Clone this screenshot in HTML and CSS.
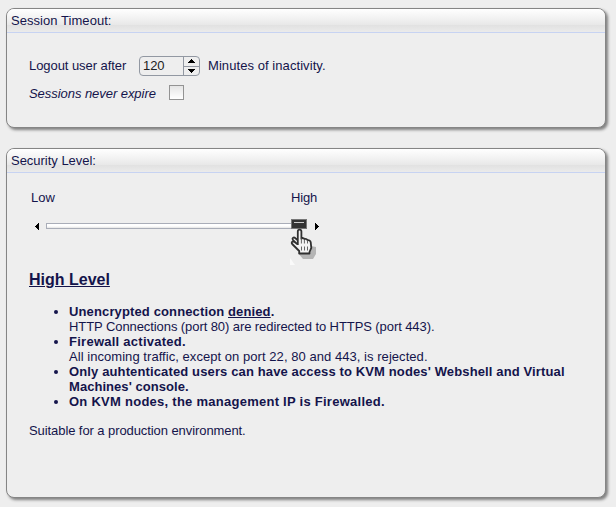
FILE: index.html
```html
<!DOCTYPE html>
<html lang="en">
<head>
<meta charset="utf-8">
<title>Security settings</title>
<link rel="stylesheet" href="styles.css">
</head>
<body>
<section class="panel timeout">
  <h2 class="panel-title">Session Timeout:</h2>
  <div class="row row-logout">
    <span class="label-logout">Logout user after</span>
    <div class="spinner">
      <span class="spinner-value">120</span>
      <div class="spinner-buttons">
        <span class="spin"><svg width="9" height="4" viewBox="0 0 9 4" shape-rendering="crispEdges"><path d="M4 0h1v1h1v1h1v1h1v1H1V3h1V2h1V1h1z"/></svg></span>
        <span class="spin"><svg width="9" height="4" viewBox="0 0 9 4" shape-rendering="crispEdges"><path d="M1 0h7v1H7v1H6v1H5v1H4V3H3V2H2V1H1z"/></svg></span>
      </div>
    </div>
    <span class="label-minutes">Minutes of inactivity.</span>
  </div>
  <div class="row row-expire">
    <em class="label-expire">Sessions never expire</em>
    <span class="checkbox"></span>
  </div>
</section>
<section class="panel security">
  <h2 class="panel-title">Security Level:</h2>
  <div class="scale"><span>Low</span><span>High</span></div>
  <div class="slider">
    <svg width="4" height="7" viewBox="0 0 4 7" shape-rendering="crispEdges"><path d="M3 0h1v7H3V6H2V5H1V4H0V3h1V2h1V1h1z"/></svg>
    <div class="track">
      <div class="thumb"></div>
      <svg class="pointer" width="28" height="38" viewBox="0 0 28 38">
        <path fill="#b5b5b5" d="M12 12h4v5l10 2v7l-3 5H13l-5-6 4-1z"/>
        <path fill="#f3f3f3" stroke="#303030" stroke-width="1.8" stroke-linejoin="round" d="M7.8 17V3.4c0-2.4 3.6-2.4 3.6 0v7.4c.6-1.2 2.8-1 3 .4 1.1-.7 2.8-.2 3.1 1.1 1.2-.4 3 .3 3.2 1.8l.6 5.7-1.8 4.2V25.500H9.200V23L2.200 16c-1.500-1.900.8-3.300 2.500-1.900l2.500 2L2.800 11.800c-1-1.900 1-3.100 2.600-1.600l2.400 2"/>
        <path fill="none" stroke="#666" d="M11.400 10.500v5M14.400 11.500v4M17.500 12.500v3M11.500 18.500v4M14.500 18.500v4M17.500 18.500v4"/>
        <path fill="#fafafa" d="M0 30l5 7H0z"/>
      </svg>
    </div>
    <svg class="arrow-right" width="4" height="7" viewBox="0 0 4 7" shape-rendering="crispEdges"><path d="M0 0h1v1h1v1h1v1h1v1H3v1H2v1H1v1H0z"/></svg>
  </div>
  <h3 class="level">High Level</h3>
  <ul class="rules">
    <li><b class="wide">Unencrypted connection <u>denied</u>.</b><br><span class="tight">HTTP Connections (port 80) are redirected to HTTPS (port 443).</span></li>
    <li><b class="wider">Firewall activated.</b><br><span class="loose">All incoming traffic, except on port 22, 80 and 443, is rejected.</span></li>
    <li><b class="wide">Only auhtenticated users can have access to KVM nodes' Webshell and Virtual</b><br><b class="loose">Machines' console.</b></li>
    <li><b class="wider">On KVM nodes, the management IP is Firewalled.</b></li>
  </ul>
  <p class="note tight">Suitable for a production environment.</p>
</section>
</body>
</html>
```

FILE: styles.css
```css
* { box-sizing: border-box; }
body {
  margin: 0;
  padding: 8px 10px 0 6px;
  min-height: 507px;
  background: #eee;
  color: #14144b;
  font: 13px/15px "Liberation Sans", Arial, sans-serif;
  white-space: nowrap;
}
svg { display: block; }
.panel {
  width: 600px;
  border: 1px solid #858585;
  border-radius: 8px;
  background: #eee;
  box-shadow: 2px 2px 3px #808080;
}
.timeout { height: 120px; margin-bottom: 20px; }
.security { height: 350px; }
.panel-title {
  margin: 0;
  height: 24px;
  padding: 4px 4px 0;
  border-bottom: 1px solid #c7d3f2;
  border-radius: 7px 7px 0 0;
  background: linear-gradient(#fff 0, #e8e8e8 16px, #e1e1e1 16px, #ebebeb 23px);
  font: inherit;
  letter-spacing: .05px;
}
.security .panel-title { letter-spacing: -.02px; }
.row { display: flex; align-items: center; padding-left: 22px; }
.row-logout { margin-top: 23px; height: 20px; }
.row-expire { margin-top: 9px; height: 15px; }
.label-logout { width: 110px; padding-bottom: 2px; letter-spacing: -.06px; }
.label-minutes { padding-bottom: 2px; letter-spacing: .07px; }
.label-expire { width: 140px; padding-top: 2px; letter-spacing: -.05px; }
.spinner {
  display: flex;
  width: 61px;
  height: 20px;
  margin-right: 8px;
  border: 1px solid #9298a2;
  border-radius: 4px;
  color: #222;
}
.spinner-value { width: 43px; padding: 1px 3px; letter-spacing: -.1px; }
.spinner-buttons { flex: 1; border-left: 1px solid #9298a2; }
.spin { display: flex; height: 8px; align-items: center; justify-content: center; }
.spin:first-child { height: 10px; padding-bottom: 1px; border-bottom: 1px solid #9298a2; }
.checkbox {
  width: 15px;
  height: 15px;
  border: 1px solid #939393;
  background: linear-gradient(#e5e5e5, #fff);
}
.scale { display: flex; justify-content: space-between; width: 286px; margin: 17px 0 0 24px; }
.scale span:last-child { letter-spacing: -.2px; }
.slider { display: flex; gap: 7px; margin: 18px 0 0 28px; height: 7px; }
.track {
  position: relative;
  width: 261px;
  height: 6px;
  border: 1px solid #a9adb8;
  background: linear-gradient(#fff 50%, #e4e4e4);
}
.arrow-right { margin-left: 1px; }
.thumb {
  position: absolute;
  top: -5px;
  right: -1px;
  width: 16px;
  height: 10px;
  border: 1px solid #777;
  background: linear-gradient(#ccc, #ccc) center 2px / 10px 1px no-repeat, #333;
}
.pointer { position: absolute; left: 243px; top: 4px; }
.level {
  margin: 41px 0 0 22px;
  font-size: 16px;
  line-height: 18px;
  text-decoration: underline;
}
.rules { margin: 15px 0 0; padding-left: 62px; }
.tight { letter-spacing: -.08px; }
.loose { letter-spacing: .05px; }
.wide { letter-spacing: .13px; }
.wider { letter-spacing: .26px; }
.note { margin: 14px 0 0 22px; }
```
